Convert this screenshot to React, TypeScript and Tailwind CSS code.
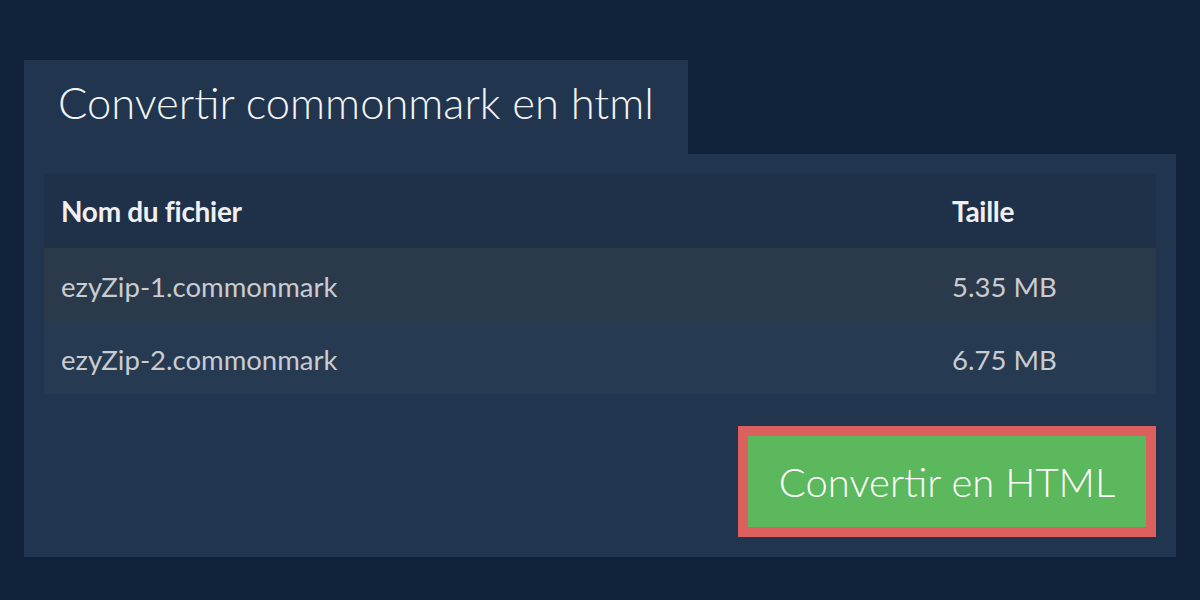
const files = [
  { name: "ezyZip-1.commonmark", size: "5.35 MB" },
  { name: "ezyZip-2.commonmark", size: "6.75 MB" },
];

export default function App() {
  return (
    <div
      className="h-[600px] w-[1200px] bg-[#10233a] px-6 pt-[60px]"
      style={{ fontFamily: "Lato, 'Open Sans', sans-serif" }}
    >
      {/* Tab header */}
      <div className="flex h-[94px] w-[664px] items-center bg-[#21354e] pl-[34px] pb-[8px]">
        <h1 className="text-[43.5px] font-light leading-none text-[#f3f4f6]">
          Convertir commonmark en html
        </h1>
      </div>

      {/* Panel */}
      <div className="flex flex-col bg-[#21354e] p-5">
        <div className="w-full">
          <div className="flex h-[74px] items-center bg-[#1f3149] px-[17px] text-[28px] font-bold tracking-[-0.3px] text-[#f0f0f0]">
            <div className="flex-1">Nom du fichier</div>
            <div className="w-[187px]">Taille</div>
          </div>
          {files.map((f, i) => (
            <div
              key={f.name}
              className={
                "flex h-[73px] items-center px-[17px] pt-[5px] text-[27.5px] text-[#c9ccd1] " +
                (i === 0 ? "bg-[#2b3a4b]" : "bg-[#263a52]")
              }
            >
              <div className="flex-1">{f.name}</div>
              <div className="w-[187px]">{f.size}</div>
            </div>
          ))}
        </div>

        <div className="mt-[32px] flex justify-end">
          <button className="flex h-[111px] w-[418px] items-center justify-center border-[10px] border-[#dc605e] bg-[#5cb85c] text-[40px] font-light text-white">
            Convertir en HTML
          </button>
        </div>
      </div>
    </div>
  );
}
